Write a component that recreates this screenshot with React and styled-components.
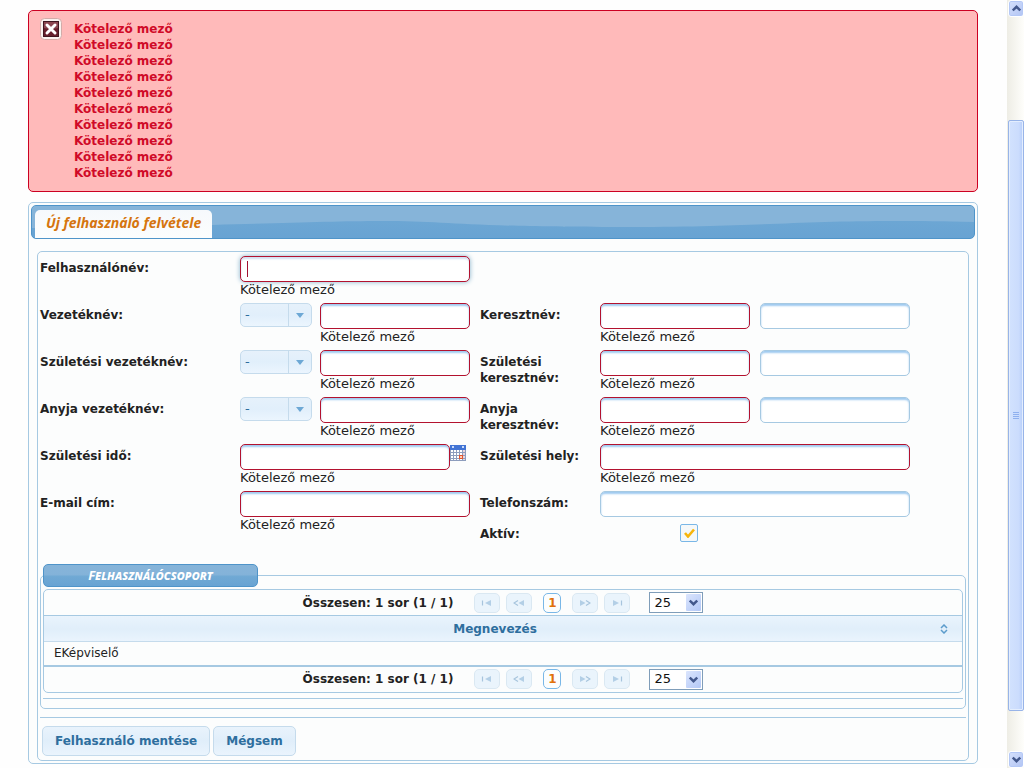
import React, { useState } from 'react'
import styled, { createGlobalStyle } from 'styled-components'

const GlobalStyle = createGlobalStyle`
  * {
    box-sizing: border-box;
  }

  body {
    margin: 0;
    background: #fefefe;
    color: #222;
    font-family: "DejaVu Sans", Verdana, sans-serif;
    font-size: 13px;
    line-height: 16px;
  }

  button, input, select {
    font: inherit;
    color: inherit;
    margin: 0;
  }
`;

const bold = `
  font-size: 12px;
  font-weight: 700;
`;

const title = `
  font-family: "Noto Sans", "Open Sans", sans-serif;
  font-weight: 700;
  font-style: italic;
`;

const Screen = styled.div`
  display: flex;
  height: 100vh;
  overflow: hidden;
`;

const Page = styled.main`
  flex: 1;
  min-width: 0;
  padding: 10px 29px 0 28px;
  display: flex;
  flex-direction: column;
  gap: 10px;
`;

/* Messages */

const ErrorBox = styled.div`
  display: flex;
  gap: 12px;
  padding: 10px 11px;
  border: 1px solid #cc0022;
  border-radius: 5px;
  background: #ffbaba;
  color: #d00a28;
`;

const ErrorIcon = styled.svg`
  width: 22px;
  height: 22px;
  margin-top: -3px;
  flex: none;
`;

const ErrorList = styled.ul`
  ${bold}
  list-style: none;
  margin: 0;
  padding: 0;
`;

/* Panel with tab */

const Panel = styled.section`
  padding: 2px;
  border: 1px solid #a6c9e2;
  border-radius: 5px;
  background: #fcfdfd;
`;

const TabBar = styled.div`
  position: relative;
  display: flex;
  align-items: flex-end;
  height: 34px;
  padding-left: 3px;
  border: 1px solid #4f94c9;
  border-radius: 5px;
  background: linear-gradient(#70a9d4, #68a3d3);
  overflow: hidden;
`;

const Wave = styled.svg`
  position: absolute;
  inset: 0;
  width: 100%;
  height: 100%;
`;

const Tab = styled.a`
  ${title}
  position: relative;
  height: 28px;
  padding: 5px 11px;
  border-radius: 5px 5px 0 0;
  background: linear-gradient(#f6f9fc, #fcfdfd);
  color: #d5750f;
  font-size: 14px;
  text-decoration: none;
`;

const Content = styled.form`
  margin: 12px 6px 0;
  padding: 4px 2px;
  border: 1px solid #a6c9e2;
  border-radius: 5px;
`;

/* Form grid */

const Grid = styled.div`
  display: grid;
  grid-template-columns: 200px 240px 120px 310px;
  row-gap: 5px;
`;

const Label = styled.label`
  ${bold}
  padding-top: 4px;
  grid-column: ${p => p.$col || 'auto'};
  grid-row: ${p => (p.$tall ? 'span 2' : 'auto')};
`;

const Cell = styled.div`
  display: flex;
  align-items: flex-start;
  grid-column: ${p => p.$col || 'auto'};
  grid-row: ${p => (p.$tall ? 'span 2' : 'auto')};
  gap: ${p => p.$gap || 0}px;
`;

const Field = styled.div`
  width: ${p => p.$width}px;
`;

const TextInput = styled.input`
  display: block;
  width: 100%;
  height: 26px;
  padding: 4px 6px;
  border: 1px solid ${p => (p.$invalid ? '#b3122f' : '#a6c9e2')};
  border-radius: 5px;
  background: #fff;
  box-shadow: inset 0 2px 2px #9fcaf0;
  outline: none;

  ${p => p.$active && `
    background: linear-gradient(#a01030, #a01030) 6px 4px / 1px 16px no-repeat #fff;
    box-shadow: 0 0 5px #85b2cb, inset 0 2px 2px #d3dff0;
    caret-color: transparent;
  `}
`;

const Hint = styled.span`
  display: block;
  height: 16px;
`;

const PrefixBox = styled.div`
  position: relative;
  width: 72px;
`;

const PrefixSelect = styled.select`
  appearance: none;
  display: block;
  width: 100%;
  height: 24px;
  padding: 0 4px;
  border: 1px solid #c5dbec;
  border-radius: 5px;
  background: linear-gradient(#e6f1fb, #e1effb 50%, #ebf5fe);
  color: #2e6e9e;
  outline: none;
`;

const PrefixArrow = styled.span`
  position: absolute;
  top: 1px;
  right: 1px;
  bottom: 1px;
  width: 23px;
  display: flex;
  align-items: center;
  justify-content: center;
  border-left: 1px solid #c5dbec;
  pointer-events: none;
`;

const CalendarButton = styled.button`
  width: 16px;
  height: 18px;
  padding: 0 0 1px;
  border: 0;
  background: none;
  line-height: 0;
`;

const CheckWrap = styled.span`
  position: relative;
  width: 18px;
  height: 18px;
  margin: 2px 0 2px 80px;
`;

const CheckInput = styled.input`
  appearance: none;
  display: block;
  width: 18px;
  height: 18px;
  border: 1px solid #79b7e7;
  border-radius: 2px;
  background: #f5f8f9;
`;

const CheckMark = styled.svg`
  position: absolute;
  top: 4px;
  left: 4px;
  pointer-events: none;
`;

/* Group fieldset */

const Group = styled.fieldset`
  margin: 20px 0 0;
  padding: 2px 2px 9px;
  border: 1px solid #a6c9e2;
  border-radius: 5px;
  min-width: 0;
`;

const Legend = styled.legend`
  padding: 0;
`;

const LegendLabel = styled.span`
  ${title}
  display: block;
  width: 215px;
  height: 23px;
  padding: 2px 0;
  border: 1px solid #4f94c9;
  border-radius: 5px;
  background: linear-gradient(#86b4d9, #84b3d9 45%, #70a9d4 55%, #68a3d3);
  color: #fff;
  font-variant: small-caps;
  text-align: center;
`;

const Divider = styled.hr`
  margin: 0;
  border: 0;
  border-top: 1px solid #a6c9e2;
`;

const TableBox = styled.div`
  margin-bottom: 5px;
  border: 1px solid #a6c9e2;
  border-radius: 5px;
`;

const PagerBar = styled.div`
  display: flex;
  align-items: center;
  justify-content: center;
  height: 25px;
`;

const PagerInfo = styled.span`
  ${bold}
  margin-right: 21px;
`;

const PagerButtons = styled.div`
  display: flex;
  gap: 6px;
`;

const PagerButton = styled.button`
  display: flex;
  align-items: center;
  justify-content: center;
  width: 26px;
  height: 20px;
  padding: 0;
  border: 1px solid #c5dbec;
  border-radius: 5px;
  background: #dfeffc;
  opacity: 0.6;
`;

const PageNumber = styled.button`
  ${bold}
  width: 18px;
  height: 20px;
  margin: 0 11px;
  padding: 0;
  border: 1px solid #79b7e7;
  border-radius: 5px;
  background: #fcfdfd;
  color: #e17009;
`;

const SizeBox = styled.div`
  position: relative;
  margin-left: 19px;
  width: 54px;
`;

const SizeSelect = styled.select`
  appearance: none;
  display: block;
  width: 100%;
  height: 21px;
  padding: 0 4px;
  border: 1px solid #7f9db9;
  border-radius: 0;
  background: #fff;
  color: #111;
  outline: none;
`;

const SizeArrow = styled.span`
  position: absolute;
  top: 2px;
  right: 2px;
  width: 15px;
  height: 17px;
  display: flex;
  align-items: center;
  justify-content: center;
  border-radius: 1px;
  background: linear-gradient(135deg, #dbe5fd, #b3c8f6);
  pointer-events: none;
`;

const Table = styled.table`
  width: 100%;
  border-collapse: collapse;
  border-top: 1px solid #a6c9e2;
  border-bottom: 2px solid #a6c9e2;
`;

const HeadCell = styled.th`
  ${bold}
  height: 26px;
  padding: 0 14px 0 10px;
  border-bottom: 1px solid #c5dbec;
  background: linear-gradient(#e9f3fc, #e0eefa 50%, #eaf4fd);
  color: #2e6e9e;
`;

const HeadInner = styled.div`
  display: flex;
  align-items: center;
  gap: 4px;

  span {
    flex: 1;
  }
`;

const BodyCell = styled.td`
  height: 24px;
  padding: 0 10px;
  font-size: 12px;
`;

const Actions = styled.div`
  display: flex;
  gap: 3px;
  margin-top: 8px;
  padding: 8px 2px 0;
  border-top: 1px solid #a6c9e2;
`;

const ActionButton = styled.button`
  ${bold}
  height: 30px;
  padding: 0 12px;
  border: 1px solid #c5dbec;
  border-radius: 5px;
  background: linear-gradient(#e9f3fc, #e0eefa 50%, #eaf4fd);
  color: #2e6e9e;
`;

/* Scroll bar */

const ScrollBar = styled.aside`
  display: flex;
  flex-direction: column;
  width: 17px;
  padding-left: 1px;
  background: linear-gradient(90deg, #eeede5, #fefefb);
`;

const ScrollButton = styled.button`
  display: flex;
  align-items: center;
  justify-content: center;
  height: 17px;
  padding: 0;
  border: 1px solid #fff;
  border-radius: 3px;
  background: linear-gradient(135deg, #d5e1fd, #b2c4f3);
  box-shadow: inset 0 0 0 1px #b4c8f6;
`;

const ScrollTrack = styled.div`
  flex: 1;
  display: grid;
  grid-template-rows: 103fr 591fr 40fr;
`;

const ScrollThumb = styled.div`
  grid-row: 2;
  display: flex;
  align-items: center;
  justify-content: center;
  border: 1px solid #98b4e8;
  border-radius: 2px;
  box-shadow: inset 0 0 0 1px #e4eefe;
  background: linear-gradient(90deg, #d2e2fe, #cbdcfd 70%, #b5cdfa);
`;

const messages = Array(10).fill('Kötelező mező')

const nameRows = [
  { id: 'name', last: 'Vezetéknév:', first: 'Keresztnév:' },
  { id: 'birth', last: 'Születési vezetéknév:', first: 'Születési keresztnév:' },
  { id: 'mother', last: 'Anyja vezetéknév:', first: 'Anyja keresztnév:' }
]

const pagerShapes = {
  first: { line: 'M1.500 1.500v5', head: 'M10 1v6L4 4z' },
  prev: { line: 'M5 1.500L1 4l4 2.500', head: 'M11 1v6L5.500 4z' },
  next: { line: 'M7 1.500L11 4l-4 2.500', head: 'M1 1v6l5.500-3z' },
  last: { line: 'M10.500 1.500v5', head: 'M2 1v6l6-3z' }
}

const Required = ({ id, width, active }) => (
  <Field $width={width}>
    <TextInput id={id} type="text" $invalid $active={active} />
    <Hint>Kötelező mező</Hint>
  </Field>
)

const Chevron = ({ up }) => (
  <svg width="9" height="7" viewBox="0 0 9 7">
    <path
      d={up ? 'M.8 5.500L4.500 1.800L8.200 5.500' : 'M.8 1.500L4.500 5.200L8.200 1.500'}
      fill="none"
      stroke="#43588c"
      strokeWidth="2.4"
    />
  </svg>
)

const PagerIcon = ({ name }) => (
  <svg width="12" height="8" viewBox="0 0 12 8">
    <path d={pagerShapes[name].line} fill="none" stroke="#6f9fc8" strokeWidth="1.2" />
    <path d={pagerShapes[name].head} fill="#83b1d8" />
  </svg>
)

const Pager = () => (
  <PagerBar>
    <PagerInfo>Összesen: 1 sor (1 / 1)</PagerInfo>
    <PagerButtons>
      <PagerButton type="button" aria-label="Első"><PagerIcon name="first" /></PagerButton>
      <PagerButton type="button" aria-label="Előző"><PagerIcon name="prev" /></PagerButton>
    </PagerButtons>
    <PageNumber type="button">1</PageNumber>
    <PagerButtons>
      <PagerButton type="button" aria-label="Következő"><PagerIcon name="next" /></PagerButton>
      <PagerButton type="button" aria-label="Utolsó"><PagerIcon name="last" /></PagerButton>
    </PagerButtons>
    <SizeBox>
      <SizeSelect aria-label="Sorok száma" defaultValue="25">
        <option>25</option>
      </SizeSelect>
      <SizeArrow><Chevron /></SizeArrow>
    </SizeBox>
  </PagerBar>
)

const NameRow = ({ id, last, first }) => (
  <>
    <Label htmlFor={`${id}-last`}>{last}</Label>
    <Cell $gap={8}>
      <PrefixBox>
        <PrefixSelect aria-label={`${last} előtag`}>
          <option>-</option>
        </PrefixSelect>
        <PrefixArrow>
          <svg width="8" height="5" viewBox="0 0 8 5"><path d="M0 0h8L4 5z" fill="#6da8d5" /></svg>
        </PrefixArrow>
      </PrefixBox>
      <Required id={`${id}-last`} width={150} />
    </Cell>
    <Label htmlFor={`${id}-first`}>{first}</Label>
    <Cell $gap={10}>
      <Required id={`${id}-first`} width={150} />
      <Field $width={150}>
        <TextInput type="text" aria-label={`${first} 2`} />
      </Field>
    </Cell>
  </>
)

const CalendarIcon = () => (
  <svg width="16" height="16" viewBox="0 0 16 16">
    <rect width="16" height="16" fill="#8d9dbd" />
    <rect width="16" height="5" fill="#4274d4" />
    <path d="M2 1h2v2H2zM12 1h2v2h-2z" fill="#c8dafa" />
    {[5, 8, 11, 14].map(y =>
      [1, 4, 7, 10, 13].map(x => (
        <rect key={`${x}-${y}`} x={x} y={y} width="2" height={y === 14 ? 1 : 2} fill={x === 13 ? '#ecd5dc' : '#fff'} />
      ))
    )}
    <rect x="9.500" y="10.500" width="3" height="3" fill="#fbd0bb" stroke="#e2542c" />
  </svg>
)

const App = () => {
  const [active, setActive] = useState(true)

  return (
    <Screen>
      <GlobalStyle />
      <Page>
        <ErrorBox role="alert">
          <ErrorIcon viewBox="0 0 22 22">
            <rect x=".5" y=".5" width="21" height="21" rx="4" fill="#f9f2ef" stroke="#d3aba8" />
            <rect x="3.500" y="3.500" width="15" height="15" fill="#651f2c" stroke="#3e1620" />
            <path d="M4 4h14v6Q11 12 4 10z" fill="#8c4650" />
            <path d="M7 7l8 8M15 7l-8 8" stroke="#fff" strokeWidth="3" strokeLinecap="round" />
          </ErrorIcon>
          <ErrorList>
            {messages.map((text, index) => (
              <li key={index}>{text}</li>
            ))}
          </ErrorList>
        </ErrorBox>

        <Panel>
          <TabBar>
            <Wave viewBox="0 0 944 32" preserveAspectRatio="none">
              <path d="M0 0H944V16C780 12 750 21 590 21S420 15 350 15S200 20 0 22z" fill="#86b4d9" />
            </Wave>
            <Tab href="#new-user">Új felhasználó felvétele</Tab>
          </TabBar>

          <Content id="new-user" onSubmit={e => e.preventDefault()}>
            <Grid>
              <Label htmlFor="username">Felhasználónév:</Label>
              <Cell $col="2 / -1"><Required id="username" width={230} active /></Cell>

              {nameRows.map(row => (
                <NameRow key={row.id} {...row} />
              ))}

              <Label htmlFor="birth-date">Születési idő:</Label>
              <Cell>
                <Required id="birth-date" width={210} />
                <CalendarButton type="button" aria-label="Naptár"><CalendarIcon /></CalendarButton>
              </Cell>
              <Label htmlFor="birth-place">Születési hely:</Label>
              <Cell><Required id="birth-place" width={310} /></Cell>

              <Label htmlFor="email" $tall>E-mail cím:</Label>
              <Cell $tall><Required id="email" width={230} /></Cell>
              <Label htmlFor="phone">Telefonszám:</Label>
              <Cell>
                <Field $width={310}><TextInput id="phone" type="text" /></Field>
              </Cell>
              <Label htmlFor="active" $col="3">Aktív:</Label>
              <Cell $col="4">
                <CheckWrap>
                  <CheckInput id="active" type="checkbox" checked={active} onChange={e => setActive(e.target.checked)} />
                  {active && (
                    <CheckMark width="11" height="10" viewBox="0 0 11 10">
                      <path d="M1 5l3 3.500L10 1.500" fill="none" stroke="#f7b50b" strokeWidth="2.6" />
                    </CheckMark>
                  )}
                </CheckWrap>
              </Cell>
            </Grid>

            <Group>
              <Legend><LegendLabel>Felhasználócsoport</LegendLabel></Legend>
              <TableBox>
                <Pager />
                <Table>
                  <thead>
                    <tr>
                      <HeadCell scope="col">
                        <HeadInner>
                          <span>Megnevezés</span>
                          <svg width="8" height="10" viewBox="0 0 8 10">
                            <path d="M1 4l3-3 3 3M1 6l3 3 3-3" fill="none" stroke="#5c9ccc" strokeWidth="1.500" />
                          </svg>
                        </HeadInner>
                      </HeadCell>
                    </tr>
                  </thead>
                  <tbody>
                    <tr>
                      <BodyCell>EKépviselő</BodyCell>
                    </tr>
                  </tbody>
                </Table>
                <Pager />
              </TableBox>
              <Divider />
            </Group>

            <Actions>
              <ActionButton type="submit">Felhasználó mentése</ActionButton>
              <ActionButton type="button">Mégsem</ActionButton>
            </Actions>
          </Content>
        </Panel>
      </Page>

      <ScrollBar>
        <ScrollButton type="button" aria-label="Fel"><Chevron up /></ScrollButton>
        <ScrollTrack>
          <ScrollThumb>
            <svg width="6" height="7" viewBox="0 0 6 7">
              <path d="M0 .5h6M0 2.500h6M0 4.500h6M0 6.500h6" stroke="#8fb0ef" />
            </svg>
          </ScrollThumb>
        </ScrollTrack>
        <ScrollButton type="button" aria-label="Le"><Chevron /></ScrollButton>
      </ScrollBar>
    </Screen>
  )
}

export default App
